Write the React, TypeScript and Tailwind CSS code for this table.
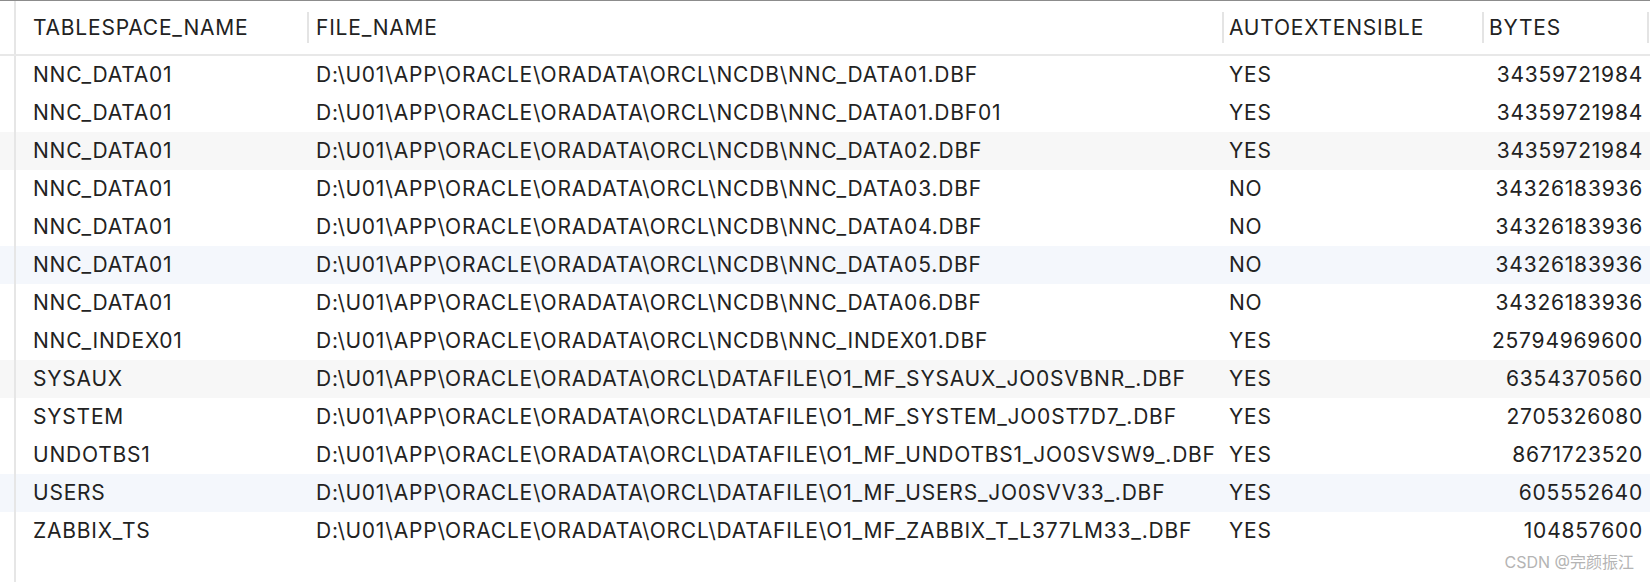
const rows: [string, string, string, string][] = [
  ['NNC_DATA01', 'D:\\U01\\APP\\ORACLE\\ORADATA\\ORCL\\NCDB\\NNC_DATA01.DBF', 'YES', '34359721984'],
  ['NNC_DATA01', 'D:\\U01\\APP\\ORACLE\\ORADATA\\ORCL\\NCDB\\NNC_DATA01.DBF01', 'YES', '34359721984'],
  ['NNC_DATA01', 'D:\\U01\\APP\\ORACLE\\ORADATA\\ORCL\\NCDB\\NNC_DATA02.DBF', 'YES', '34359721984'],
  ['NNC_DATA01', 'D:\\U01\\APP\\ORACLE\\ORADATA\\ORCL\\NCDB\\NNC_DATA03.DBF', 'NO', '34326183936'],
  ['NNC_DATA01', 'D:\\U01\\APP\\ORACLE\\ORADATA\\ORCL\\NCDB\\NNC_DATA04.DBF', 'NO', '34326183936'],
  ['NNC_DATA01', 'D:\\U01\\APP\\ORACLE\\ORADATA\\ORCL\\NCDB\\NNC_DATA05.DBF', 'NO', '34326183936'],
  ['NNC_DATA01', 'D:\\U01\\APP\\ORACLE\\ORADATA\\ORCL\\NCDB\\NNC_DATA06.DBF', 'NO', '34326183936'],
  ['NNC_INDEX01', 'D:\\U01\\APP\\ORACLE\\ORADATA\\ORCL\\NCDB\\NNC_INDEX01.DBF', 'YES', '25794969600'],
  ['SYSAUX', 'D:\\U01\\APP\\ORACLE\\ORADATA\\ORCL\\DATAFILE\\O1_MF_SYSAUX_JO0SVBNR_.DBF', 'YES', '6354370560'],
  ['SYSTEM', 'D:\\U01\\APP\\ORACLE\\ORADATA\\ORCL\\DATAFILE\\O1_MF_SYSTEM_JO0ST7D7_.DBF', 'YES', '2705326080'],
  ['UNDOTBS1', 'D:\\U01\\APP\\ORACLE\\ORADATA\\ORCL\\DATAFILE\\O1_MF_UNDOTBS1_JO0SVSW9_.DBF', 'YES', '8671723520'],
  ['USERS', 'D:\\U01\\APP\\ORACLE\\ORADATA\\ORCL\\DATAFILE\\O1_MF_USERS_JO0SVV33_.DBF', 'YES', '605552640'],
  ['ZABBIX_TS', 'D:\\U01\\APP\\ORACLE\\ORADATA\\ORCL\\DATAFILE\\O1_MF_ZABBIX_T_L377LM33_.DBF', 'YES', '104857600'],
];

// every third row is shaded, alternating gray / blue
function rowBg(i: number) {
  if (i % 3 !== 2) return 'bg-white';
  return i % 6 === 2 ? 'bg-[#f7f7f7]' : 'bg-[#f4f7fc]';
}

function Divider({ show }: { show: boolean }) {
  return <div className={`w-[2px] h-[31px] shrink-0 ${show ? 'bg-[#e4e4e4]' : ''}`}></div>;
}

export default function App() {
  return (
    <div className="w-[1650px] h-[582px] overflow-hidden bg-white border-t border-[#8c8c8c] flex flex-col text-[21px] tracking-[0.78px] text-[#222] font-['Inter','Liberation_Sans',sans-serif] relative">
      {/* Header */}
      <div className="flex h-[55px] shrink-0 items-center border-b-2 border-[#e8e8e8]">
        <div className="w-[16px] h-full shrink-0 border-r-2 border-[#e6e6e6]"></div>
        <div className="w-[291px] shrink-0 pl-[17px] whitespace-nowrap">TABLESPACE_NAME</div>
        <Divider show />
        <div className="w-[913px] shrink-0 pl-[7px]">FILE_NAME</div>
        <Divider show />
        <div className="w-[258px] shrink-0 pl-[5px]">AUTOEXTENSIBLE</div>
        <Divider show />
        <div className="w-[163px] shrink-0 pl-[5px]">BYTES</div>
        <Divider show />
      </div>

      {/* Rows */}
      {rows.map((r, i) => (
        <div key={i} className={`flex h-[38px] shrink-0 items-center ${rowBg(i)}`}>
          <div className="w-[16px] h-full shrink-0 border-r-2 border-[#e6e6e6]"></div>
          <div className="w-[291px] shrink-0 pl-[17px] whitespace-nowrap">{r[0]}</div>
          <Divider show={false} />
          <div className="w-[913px] shrink-0 pl-[7px] whitespace-nowrap">{r[1]}</div>
          <Divider show={false} />
          <div className="w-[258px] shrink-0 pl-[5px]">{r[2]}</div>
          <Divider show={false} />
          <div className="w-[163px] shrink-0 pr-[4px] text-right">{r[3]}</div>
        </div>
      ))}

      {/* Empty area */}
      <div className="flex flex-1">
        <div className="w-[16px] h-full shrink-0 border-r-2 border-[#e6e6e6]"></div>
      </div>

      <div className="absolute right-[16px] bottom-[8px] text-[16px] tracking-normal text-[#b4b4b4] font-['Inter','Noto_Sans_CJK_SC',sans-serif]">
        CSDN @完颜振江
      </div>
    </div>
  );
}
